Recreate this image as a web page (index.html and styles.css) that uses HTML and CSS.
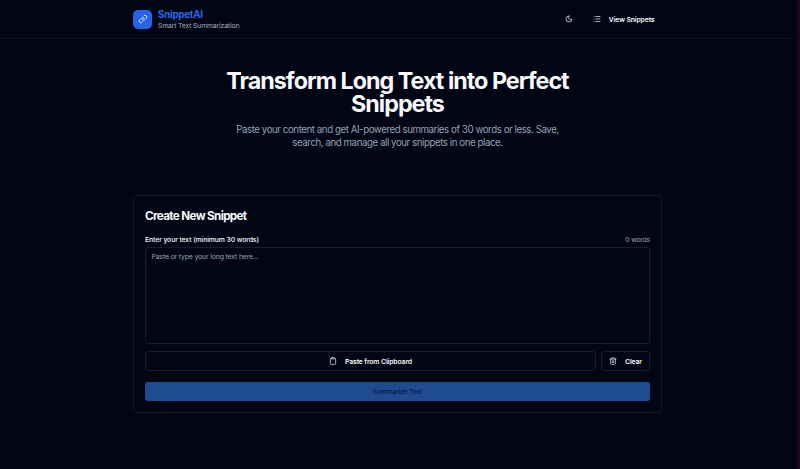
FILE: index.html
```html
<!DOCTYPE html>
<html lang="en">
<head>
<meta charset="utf-8">
<title>SnippetAI</title>
<link rel="stylesheet" href="styles.css">
</head>
<body>
<div class="page">
  <header class="header">
    <div class="container header-row">
      <div class="brand">
        <span class="logo">
          <svg class="icon icon-link" viewBox="0 0 24 24"><path d="M13.828 10.172a4 4 0 0 0-5.656 0l-4 4a4 4 0 1 0 5.656 5.656l1.102-1.101m-.758-4.899a4 4 0 0 0 5.656 0l4-4a4 4 0 0 0-5.656-5.656l-1.1 1.1"/></svg>
        </span>
        <div>
          <div class="brand-name">SnippetAI</div>
          <div class="tagline">Smart Text Summarization</div>
        </div>
      </div>
      <nav class="nav">
        <button class="icon-button" aria-label="Toggle theme"><svg class="icon" viewBox="0 0 24 24"><path d="M12 3a6 6 0 0 0 9 9 9 9 0 1 1-9-9Z"/></svg></button>
        <a class="nav-link"><svg class="icon icon-list" viewBox="0 0 24 24"><path d="M8 4.5h13M8 12h13M8 19.5h13M3 4.5h.01M3 12h.01M3 19.5h.01"/></svg><span>View Snippets</span></a>
      </nav>
    </div>
  </header>
  <main class="container">
    <section class="hero">
      <h1>Transform Long Text into Perfect<br>Snippets</h1>
      <p>Paste your content and get AI-powered summaries of 30 words or less. Save,<br>search, and manage all your snippets in one place.</p>
    </section>
    <section class="card">
      <h2>Create New Snippet</h2>
      <div class="label-row">
        <label for="text">Enter your text (minimum 30 words)</label>
        <span class="count">0 words</span>
      </div>
      <textarea id="text" placeholder="Paste or type your long text here..."></textarea>
      <div class="actions">
        <button class="button paste"><svg class="icon" viewBox="0 0 24 24"><rect x="8" y="2" width="8" height="4" rx="1"/><path d="M16 4h2a2 2 0 0 1 2 2v14a2 2 0 0 1-2 2H6a2 2 0 0 1-2-2V6a2 2 0 0 1 2-2h2"/></svg><span>Paste from Clipboard</span></button>
        <button class="button clear"><svg class="icon" viewBox="0 0 24 24"><path d="M3 6h18M19 6v14a2 2 0 0 1-2 2H7a2 2 0 0 1-2-2V6M8 6V4a2 2 0 0 1 2-2h4a2 2 0 0 1 2 2v2M10 11v6M14 11v6"/></svg><span>Clear</span></button>
      </div>
      <button class="submit" disabled>Summarize Text</button>
    </section>
  </main>
</div>
</body>
</html>
```
FILE: styles.css
```css
* { box-sizing: border-box; }
body {
  margin: 0;
  background: #010514;
  color: #f8fafc;
  font-family: Inter, "Liberation Sans", sans-serif;
  font-size: 6.85px;
  letter-spacing: -0.13px;
}
.page { height: 469px; padding-right: 2px; border-right: 3px solid #20051f; overflow: hidden; }
.container { width: 529px; margin: 0 auto; }
.header { height: 39px; border-bottom: 1px solid #0d1422; }
.header-row { height: 38px; display: flex; align-items: center; justify-content: space-between; }
.brand { display: flex; align-items: center; gap: 6px; }
.logo {
  width: 19px; height: 19px; border-radius: 5px; background: #2563eb;
  display: flex; align-items: center; justify-content: center;
}
.icon { width: 8px; height: 8px; flex: none; fill: none; stroke: currentColor; stroke-width: 2; stroke-linecap: round; stroke-linejoin: round; }
.icon-link { width: 10px; height: 10px; }
.brand-name { font-size: 9.7px; line-height: 13px; font-weight: 700; letter-spacing: -0.2px; color: #2d68ec; }
.tagline { line-height: 9px; letter-spacing: -0.16px; color: #a3aec0; }
.nav { display: flex; align-items: center; gap: 14.5px; padding-right: 7.5px; }
.icon-button { width: 19px; height: 19px; padding: 0; border: 0; background: none; color: inherit; display: flex; align-items: center; justify-content: center; }
.nav-link { display: flex; align-items: center; gap: 7.5px; font-weight: 600; }
.hero { padding-top: 30px; height: 156px; text-align: center; }
h1 { margin: 0; font-size: 23.3px; line-height: 23.3px; font-weight: 700; letter-spacing: -0.98px; }
.hero p { margin: 7px 0 0; font-size: 9.7px; line-height: 13.5px; letter-spacing: -0.43px; color: #94a3b8; }
.card { height: 218px; padding: 12px 11px 11px; border: 1px solid #131a28; border-radius: 4px; }
h2 { margin: 0; font-size: 11.7px; line-height: 16px; font-weight: 700; letter-spacing: -0.66px; }
.label-row { margin-top: 11px; height: 9px; line-height: 9px; display: flex; justify-content: space-between; font-weight: 500; letter-spacing: -0.1px; }
.count { color: #94a3b8; font-weight: 400; letter-spacing: -0.2px; }
textarea {
  display: block; width: 100%; height: 97px; margin-top: 3px; padding: 4px 5.5px;
  border: 1px solid #171e2b; border-radius: 3px; background: transparent; color: inherit;
  font: inherit; line-height: 10px; letter-spacing: inherit; resize: none;
}
textarea::placeholder { color: #94a3b8; opacity: 1; }
.actions { display: flex; gap: 5px; margin-top: 7px; }
.button {
  height: 20px; padding: 0 8px; border: 1px solid #171e2b; border-radius: 3px; background: transparent;
  color: inherit; font: inherit; font-weight: 600; letter-spacing: inherit; display: flex; align-items: center; justify-content: center; gap: 8px;
}
.paste { flex: 1; }
.clear { width: 49px; padding: 0; }
.submit {
  display: block; width: 100%; height: 19.5px; margin-top: 10.5px; padding: 0; border: 0; border-radius: 3px;
  background: #1f4b91; color: #0b1c40; font: inherit; font-weight: 500; letter-spacing: -0.2px;
}
```
